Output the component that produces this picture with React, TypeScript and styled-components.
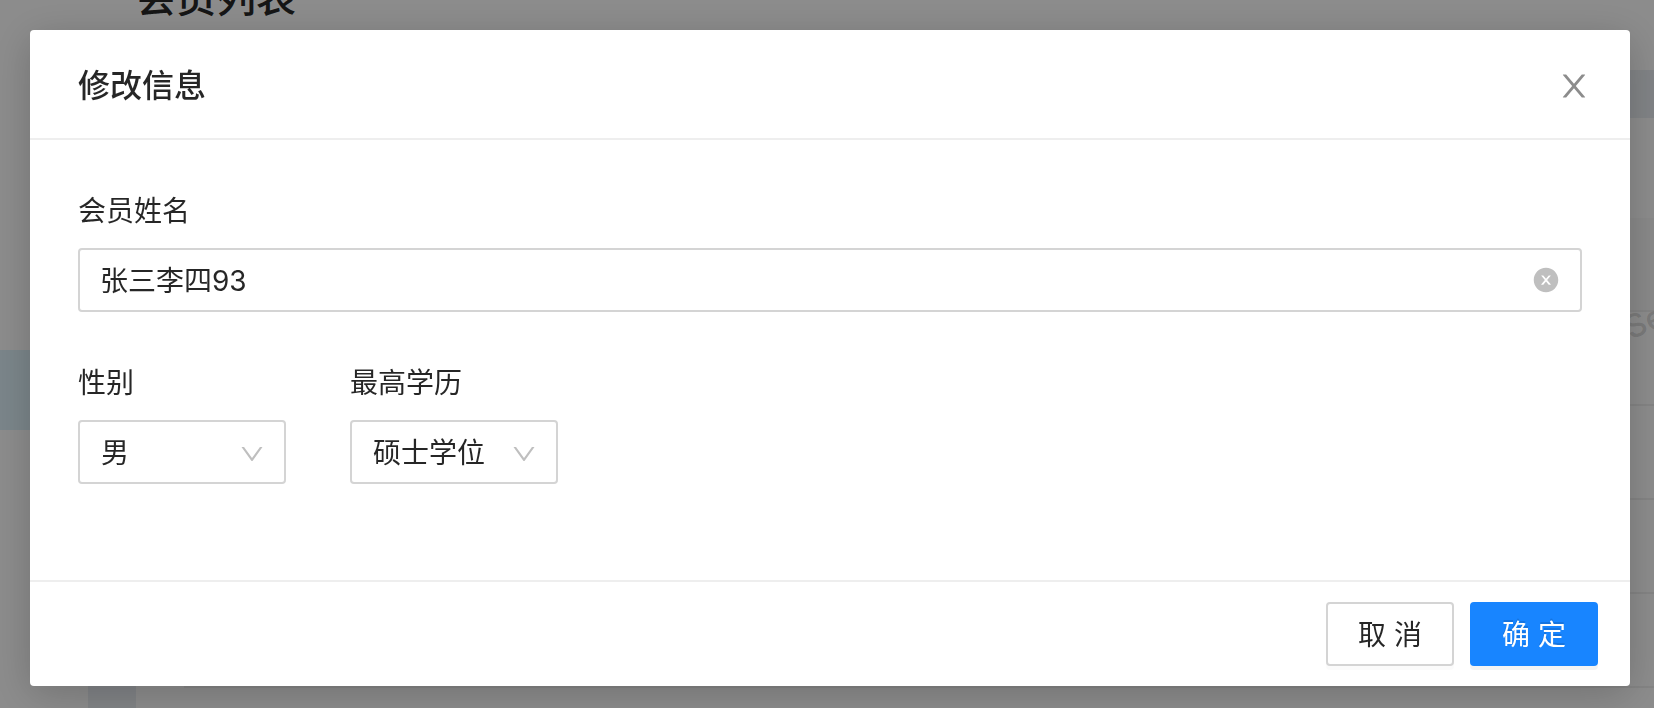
import React, { useState } from "react";
import styled, { createGlobalStyle, css } from "styled-components";

const GlobalStyle = createGlobalStyle`
  *, *::before, *::after { box-sizing: border-box; }
  body {
    margin: 0;
    color: rgba(0, 0, 0, 0.85);
    background: #fff;
    font-family: Inter, "Noto Sans CJK SC", sans-serif;
    font-size: 28px;
    line-height: 44px;
  }
  button, input, select { font: inherit; color: inherit; }
`;

/* ---------- Member list page behind the dialog ---------- */

const Page = styled.div`
  display: flex;
  height: 100vh;
  overflow: hidden;
`;

const Sider = styled.nav`
  flex: 0 0 88px;
  padding-top: 350px;
  background: #fff;
`;

const ActiveItem = styled.div`
  height: 80px;
  background: #e0f3fb;
`;

const Main = styled.main`
  flex: 1;
  min-width: 0;
  background: #ebeff4;
`;

const PageHeader = styled.header`
  margin-top: -30px;
  padding: 0 48px 44px;
  background: #fff;
`;

const PageTitle = styled.h1`
  margin: 0;
  font-size: 40px;
  font-weight: 500;
  line-height: 56px;
`;

const ListCard = styled.section`
  position: relative;
  margin: 48px 0 0 48px;
  padding: 100px 0 0 48px;
  background: #fff;
`;

const TableHead = styled.div`
  height: 94px;
  background: #fafafa;
  border-bottom: 2px solid #f0f0f0;
`;

const TableRow = styled.div`
  height: 94px;
  border-bottom: 2px solid #f0f0f0;
`;

const Watermark = styled.span`
  position: absolute;
  top: 182px;
  right: -10px;
  color: rgba(0, 0, 0, 0.15);
  font-size: 32px;
  font-weight: 500;
  transform: rotate(-22deg);
`;

/* ---------- Dialog ---------- */

const Mask = styled.div`
  position: fixed;
  inset: 0;
  padding: 30px 24px 22px 30px;
  background: rgba(0, 0, 0, 0.45);
`;

const Dialog = styled.form`
  background: #fff;
  border-radius: 4px;
  box-shadow: 0 8px 40px rgba(0, 0, 0, 0.2);
`;

const DialogHeader = styled.header`
  display: flex;
  align-items: center;
  justify-content: space-between;
  padding: 34px 38px 30px 48px;
  border-bottom: 2px solid #eee;
`;

const DialogTitle = styled.h2`
  margin: 0;
  font-size: 32px;
  font-weight: 500;
  line-height: 44px;
`;

const IconButton = styled.button`
  display: flex;
  padding: 0;
  border: 0;
  background: none;
  cursor: pointer;
`;

const CloseButton = styled(IconButton)`
  color: rgba(0, 0, 0, 0.45);
`;

const ClearButton = styled(IconButton)`
  color: #bfbfbf;
`;

const DialogBody = styled.div`
  display: flex;
  flex-direction: column;
  gap: 48px;
  padding: 48px 48px 96px;
`;

const FieldRow = styled.div`
  display: flex;
  gap: 64px;
`;

const Field = styled.div`
  display: flex;
  flex-direction: column;
  gap: 14px;
`;

const FieldLabel = styled.label`
  line-height: 46px;
`;

const controlFrame = css`
  height: 64px;
  border: 2px solid #d4d4d4;
  border-radius: 4px;
  background: #fff;
`;

const InputBox = styled.div`
  ${controlFrame}
  display: flex;
  align-items: center;
  padding: 0 20px;
`;

const TextInput = styled.input`
  flex: 1;
  min-width: 0;
  padding: 2px 0 0;
  border: 0;
  outline: 0;
  background: none;
`;

const SelectBox = styled.div`
  display: grid;
  align-items: center;
  width: 208px;

  > * { grid-area: 1 / 1; }
  > svg {
    justify-self: end;
    margin-right: 20px;
    margin-top: 4px;
    color: #bfbfbf;
    pointer-events: none;
  }
`;

const Select = styled.select`
  ${controlFrame}
  width: 100%;
  padding: 2px 48px 0 21px;
  appearance: none;
  outline: 0;
`;

const DialogFooter = styled.footer`
  display: flex;
  justify-content: flex-end;
  gap: 16px;
  padding: 20px 32px;
  border-top: 2px solid #eee;
`;

const Button = styled.button<{ $primary?: boolean }>`
  width: 128px;
  height: 64px;
  padding: 2px 0 0;
  border: 2px solid ${(p) => (p.$primary ? "#1885ff" : "#d4d4d4")};
  border-radius: 4px;
  background: ${(p) => (p.$primary ? "#1885ff" : "#fff")};
  color: ${(p) => (p.$primary ? "#fff" : "inherit")};
  text-shadow: ${(p) => (p.$primary ? "0 -2px 0 rgba(0, 0, 0, 0.12)" : "none")};
  box-shadow: 0 4px 0 rgba(0, 0, 0, ${(p) => (p.$primary ? 0.045 : 0.016)});
  cursor: pointer;
`;

const icons = {
  close:
    "M563.8 512l262.5-312.9c4.4-5.2.7-13.1-6.1-13.1h-79.8c-4.7 0-9.2 2.1-12.3 5.7L511.6 449.8 295.1 191.7c-3-3.6-7.5-5.7-12.3-5.7H203c-6.8 0-10.5 7.9-6.1 13.1L459.4 512 196.9 824.9A7.95 7.95 0 00203 838h79.8c4.7 0 9.2-2.1 12.3-5.7l216.5-258.1 216.5 258.1c3 3.6 7.5 5.7 12.3 5.7h79.8c6.8 0 10.5-7.9 6.1-13.1L563.8 512z",
  clear:
    "M512 64C264.6 64 64 264.6 64 512s200.6 448 448 448 448-200.6 448-448S759.4 64 512 64zm165.4 618.2l-66-.3L512 563.4l-99.3 118.4-66.1.3c-4.4 0-8-3.5-8-8 0-1.9.7-3.7 1.9-5.2l130.1-155L340.5 359a8.32 8.32 0 01-1.9-5.2c0-4.4 3.6-8 8-8l66.1.3L512 464.6l99.3-118.4 66-.3c4.4 0 8 3.5 8 8 0 1.9-.7 3.7-1.9 5.2L553.5 514l130 155c1.2 1.5 1.9 3.3 1.9 5.2 0 4.4-3.6 8-8 8z",
  down:
    "M884 256h-75c-5.1 0-9.9 2.5-12.9 6.6L512 654.2 227.9 262.6c-3-4.1-7.8-6.6-12.9-6.6h-75c-6.5 0-10.3 7.4-6.5 12.7l352.6 486.1c12.8 17.6 39 17.6 51.7 0l352.6-486.1c3.9-5.3.1-12.7-6.4-12.7z",
};

function Icon({ name, size }: { name: keyof typeof icons; size: number }) {
  return (
    <svg viewBox="0 0 1024 1024" width={size} height={size} fill="currentColor" aria-hidden="true">
      <path d={icons[name]} />
    </svg>
  );
}

interface SelectFieldProps {
  id: string;
  label: string;
  options: string[];
  initial: string;
}

function SelectField({ id, label, options, initial }: SelectFieldProps) {
  return (
    <Field>
      <FieldLabel htmlFor={id}>{label}</FieldLabel>
      <SelectBox>
        <Select id={id} defaultValue={initial}>
          {options.map((option) => (
            <option key={option}>{option}</option>
          ))}
        </Select>
        <Icon name="down" size={28} />
      </SelectBox>
    </Field>
  );
}

export default function App() {
  const [name, setName] = useState("张三李四93");

  return (
    <>
      <GlobalStyle />
      <Page aria-hidden="true">
        <Sider>
          <ActiveItem />
        </Sider>
        <Main>
          <PageHeader>
            <PageTitle>会员列表</PageTitle>
          </PageHeader>
          <ListCard>
            <TableHead />
            <TableRow />
            <TableRow />
            <TableRow />
            <TableRow />
            <TableRow />
            <Watermark>Se</Watermark>
          </ListCard>
        </Main>
      </Page>
      <Mask>
        <Dialog role="dialog" aria-labelledby="dialog-title" onSubmit={(e) => e.preventDefault()}>
          <DialogHeader>
            <DialogTitle id="dialog-title">修改信息</DialogTitle>
            <CloseButton type="button" aria-label="关闭">
              <Icon name="close" size={36} />
            </CloseButton>
          </DialogHeader>
          <DialogBody>
            <Field>
              <FieldLabel htmlFor="member-name">会员姓名</FieldLabel>
              <InputBox>
                <TextInput id="member-name" value={name} onChange={(e) => setName(e.target.value)} />
                <ClearButton type="button" aria-label="清除" onClick={() => setName("")}>
                  <Icon name="clear" size={28} />
                </ClearButton>
              </InputBox>
            </Field>
            <FieldRow>
              <SelectField id="gender" label="性别" options={["男", "女"]} initial="男" />
              <SelectField
                id="degree"
                label="最高学历"
                options={["学士学位", "硕士学位", "博士学位"]}
                initial="硕士学位"
              />
            </FieldRow>
          </DialogBody>
          <DialogFooter>
            <Button type="button">取 消</Button>
            <Button type="submit" $primary>
              确 定
            </Button>
          </DialogFooter>
        </Dialog>
      </Mask>
    </>
  );
}
